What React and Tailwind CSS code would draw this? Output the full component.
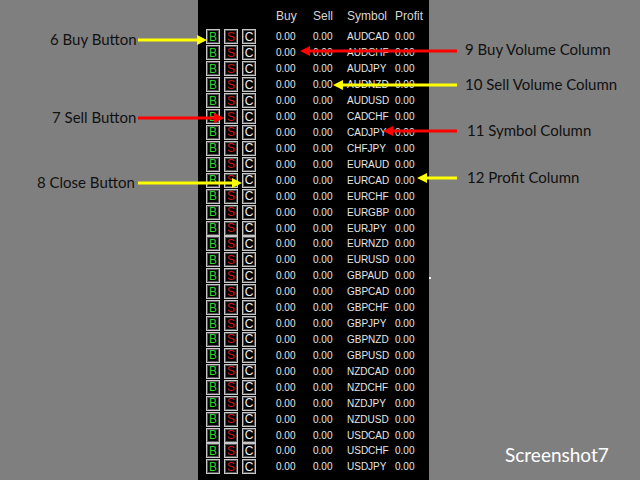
import React from "react";

const symbols = [
  "AUDCAD", "AUDCHF", "AUDJPY", "AUDNZD", "AUDUSD", "CADCHF", "CADJPY",
  "CHFJPY", "EURAUD", "EURCAD", "EURCHF", "EURGBP", "EURJPY", "EURNZD",
  "EURUSD", "GBPAUD", "GBPCAD", "GBPCHF", "GBPJPY", "GBPNZD", "GBPUSD",
  "NZDCAD", "NZDCHF", "NZDJPY", "NZDUSD", "USDCAD", "USDCHF", "USDJPY"
];

// left labels point right at the buttons, right labels point left at the columns
const notes = [
  { text: "6 Buy Button", x: 50, y: 40 },
  { text: "7 Sell Button", x: 52, y: 118 },
  { text: "8 Close Button", x: 37, y: 183 },
  { text: "9 Buy Volume Column", x: 465, y: 50 },
  { text: "10 Sell Volume Column", x: 465, y: 85 },
  { text: "11 Symbol Column", x: 467, y: 131 },
  { text: "12 Profit Column", x: 467, y: 178 }
];

const arrows = [
  { x1: 138, x2: 207, y: 40, color: "#ffff00" },
  { x1: 138, x2: 224, y: 118, color: "#ff0000" },
  { x1: 138, x2: 242, y: 183, color: "#ffff00" },
  { x1: 457, x2: 300, y: 51, color: "#ff0000" },
  { x1: 457, x2: 333, y: 85, color: "#ffff00" },
  { x1: 457, x2: 383, y: 131, color: "#ff0000" },
  { x1: 457, x2: 417, y: 178, color: "#ffff00" }
];

function Btn({ label, color }) {
  return (
    <div className="w-[14px] h-[15px] border border-[#c8c8c8] shadow-[inset_0_0_0_1px_#555] bg-black flex items-center justify-center">
      <span className={`text-[12px] leading-none ${color}`}>{label}</span>
    </div>
  );
}

function Arrow({ x1, x2, y, color }) {
  const dir = x2 > x1 ? 1 : -1;
  const base = x2 - dir * 10;
  return (
    <g>
      <line x1={x1} y1={y} x2={base} y2={y} stroke={color} strokeWidth="3" />
      <polygon points={`${x2},${y} ${base},${y - 5} ${base},${y + 5}`} fill={color} />
    </g>
  );
}

export default function App() {
  return (
    <div className="relative w-[640px] h-[480px] bg-[#7f7f7f] overflow-hidden flex">
      <div className="w-[198px] shrink-0" />
      <div className="w-[231px] h-full bg-black font-['Liberation_Sans',Arial,sans-serif]">
        <div className="h-[29px] pt-[3px] grid grid-cols-[78px_37px_34px_48px_auto] items-center text-[12px] text-[#d6d6d6]">
          <div />
          <div>Buy</div>
          <div>Sell</div>
          <div>Symbol</div>
          <div>Profit</div>
        </div>
        {symbols.map((s) => (
          <div key={s} className="h-[15.93px] grid grid-cols-[78px_37px_34px_48px_auto] items-center text-[10px] text-[#e6e6e6]">
            <div className="pl-[8px] flex gap-[4px]">
              <Btn label="B" color="text-[#2ed52e]" />
              <Btn label="S" color="text-[#d41414]" />
              <Btn label="C" color="text-[#f0f0f0]" />
            </div>
            <div>0.00</div>
            <div>0.00</div>
            <div>{s}</div>
            <div>0.00</div>
          </div>
        ))}
      </div>

      <svg className="absolute inset-0" width="640" height="480">
        {arrows.map((a, i) => (
          <Arrow key={i} {...a} />
        ))}
        <rect x="429" y="277" width="2" height="2" fill="#ffffff" />
      </svg>

      {notes.map((n) => (
        <div
          key={n.text}
          className="absolute text-[15px] leading-none text-[#111] font-['Lato','Noto_Sans',sans-serif] whitespace-nowrap"
          style={{ left: n.x, top: n.y - 8 }}
        >
          {n.text}
        </div>
      ))}
      <div className="absolute left-[505px] top-[445px] text-[19px] leading-none text-white font-['Lato','Noto_Sans',sans-serif]">
        Screenshot7
      </div>
    </div>
  );
}
